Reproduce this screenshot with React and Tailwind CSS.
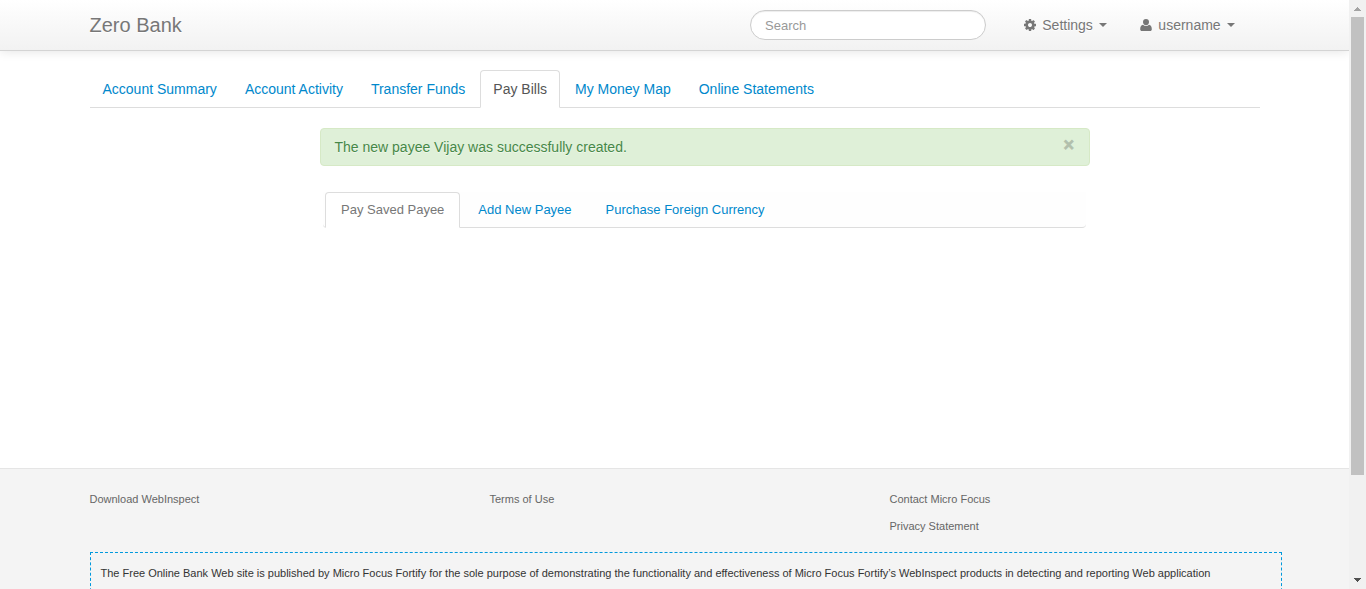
const GEAR =
  "M1152 896q0-106-75-181t-181-75-181 75-75 181 75 181 181 75 181-75 75-181zm512-109v222q0 12-8 23t-20 13l-185 28q-19 54-39 91 35 50 107 138 10 12 10 25t-9 23q-27 37-99 108t-94 71q-12 0-26-9l-138-108q-44 23-91 38-16 136-29 186-7 28-36 28h-222q-14 0-24.5-8.5t-11.5-21.5l-28-184q-49-16-90-37l-141 107q-10 9-25 9-14 0-25-11-126-114-165-168-7-10-7-23 0-12 8-23 15-21 51-66.5t54-70.5q-27-50-41-99l-183-27q-13-2-21-12.5t-8-23.5v-222q0-12 8-23t19-13l186-28q14-46 39-92-40-57-107-138-10-12-10-24 0-10 9-23 26-36 98.5-107.5t94.5-71.5q13 0 26 10l138 107q44-23 91-38 16-136 29-186 7-28 36-28h222q14 0 24.5 8.5t11.5 21.5l28 184q49 16 90 37l142-107q9-9 24-9 13 0 25 10 129 119 165 170 7 8 7 22 0 12-8 23-15 21-51 66.5t-54 70.5q26 50 41 98l183 28q13 2 21 12.5t8 23.5z";

const mainTabs = [
  "Account Summary",
  "Account Activity",
  "Transfer Funds",
  "Pay Bills",
  "My Money Map",
  "Online Statements",
];

const payTabs = ["Pay Saved Payee", "Add New Payee", "Purchase Foreign Currency"];

function Caret() {
  return (
    <span className="mb-px ml-1.5 border-x-4 border-t-4 border-x-transparent border-t-[#777777]" />
  );
}

function Header() {
  return (
    <header className="h-[51px] shrink-0 border-b border-[#d4d4d4] bg-linear-to-b from-white to-[#f2f2f2] shadow-[0_1px_10px_rgba(0,0,0,0.1)]">
      <div className="mx-auto flex h-[50px] w-[1170px] items-center text-[#777777] [text-shadow:0_1px_0_#fff]">
        <a className="w-[660.5px] text-[20px] leading-5">Zero Bank</a>
        <input
          className="h-[30px] w-[236px] rounded-full border border-[#cccccc] bg-white px-3.5 text-[13px] shadow-[inset_0_1px_1px_rgba(0,0,0,0.075)] outline-none placeholder:text-[#999999]"
          placeholder="Search"
        />
        <a className="ml-[37.6px] flex items-center text-sm leading-5">
          <svg className="mr-[6.7px] h-3 w-3" viewBox="128 128 1536 1536" fill="currentColor">
            <path d={GEAR} />
          </svg>
          Settings
          <Caret />
        </a>
        <a className="ml-[33.2px] flex items-center text-sm leading-5">
          <svg className="mr-[6.3px] h-3 w-3" viewBox="0 0 12 12" fill="currentColor">
            <ellipse cx="6" cy="3.1" rx="3" ry="3.1" />
            <path d="M3 5.700C1 6 .2 7.800.2 10.200.2 11.300.9 12 1.900 12h8.200c1 0 1.700-.7 1.700-1.800C11.800 7.800 11 6 9 5.700 8.200 6.500 7.200 6.900 6 6.900S3.800 6.500 3 5.700z" />
          </svg>
          username
          <Caret />
        </a>
      </div>
    </header>
  );
}

function MainTabs() {
  return (
    <nav className="mt-[19px] flex h-[38px] border-b border-[#dddddd] text-sm leading-5">
      {mainTabs.map((t) => (
        <a
          key={t}
          className={
            t === "Pay Bills"
              ? "mr-0.5 h-[38px] rounded-t border border-[#dddddd] border-b-white bg-white px-3 pt-2 text-[#555555]"
              : "mr-0.5 h-[38px] border border-transparent px-3 pt-2 text-[#0088cc]"
          }
        >
          {t}
        </a>
      ))}
    </nav>
  );
}

function Footer() {
  return (
    <footer className="h-[121px] shrink-0 border-t border-[#e5e5e5] bg-[#f4f4f4] pl-[89.5px] text-[11px] text-[#666666]">
      <div className="flex h-[83px] pt-[17px] leading-[27px]">
        <a className="w-[400px]">Download WebInspect</a>
        <a className="w-[400px]">Terms of Use</a>
        <div className="flex flex-col">
          <a>Contact Micro Focus</a>
          <a>Privacy Statement</a>
        </div>
      </div>
      <div className="h-[60px] w-[1192px] border border-dashed border-[#0099dd] px-2.5 pt-2.5 leading-5 whitespace-nowrap text-[#333333]">
        The Free Online Bank Web site is published by Micro Focus Fortify for the sole purpose of
        demonstrating the functionality and effectiveness of Micro Focus Fortify’s WebInspect products
        in detecting and reporting Web application
      </div>
    </footer>
  );
}

function Scrollbar() {
  return (
    <div className="flex w-[17px] flex-col items-center bg-[#f1f1f1]">
      <svg className="h-[17px] w-[17px] shrink-0" viewBox="0 0 17 17" shapeRendering="crispEdges">
        <path d="M5 11V10H6V9H7V8H8V7H9V8H10V9H11V10H12V11z" fill="#a3a3a3" />
      </svg>
      <div className="h-[458px] w-[13px] bg-[#c1c1c1]" />
      <svg className="mt-auto h-[17px] w-[17px] shrink-0" viewBox="0 0 17 17" shapeRendering="crispEdges">
        <path d="M5 6V7H6V8H7V9H8V10H9V9H10V8H11V7H12V6z" fill="#505050" />
      </svg>
    </div>
  );
}

export default function App() {
  return (
    <div className="flex h-[589px] overflow-hidden bg-white font-['Liberation_Sans',Arial,sans-serif]">
      <div className="flex w-[1349px] flex-col overflow-hidden">
        <Header />
        <main className="mx-auto w-[1170px] grow">
          <MainTabs />
          <div className="mt-5 ml-[230.5px] w-[770px]">
            <div className="flex h-[38px] justify-between rounded border border-[#d6e9c6] bg-[#dff0d8] pt-2 pr-[15px] pl-[13.5px] text-sm leading-5 text-[#468847] [text-shadow:0_1px_0_rgba(255,255,255,0.5)]">
              <span>The new payee Vijay was successfully created.</span>
              <button className="-mt-0.5 h-5 text-[18px] leading-5 font-bold text-black opacity-20 [-webkit-text-stroke:0.8px_#000] [text-shadow:0_1px_0_#fff]">
                ×
              </button>
            </div>
            <div className="mt-[26px] mr-1 ml-[3px] flex h-9 rounded-b border-b border-[#dddddd] bg-[#fefefe] pl-0.5 text-[13px] leading-[18px]">
              {payTabs.map((t, i) => (
                <a
                  key={t}
                  className={
                    i === 0
                      ? "mr-0.5 h-9 rounded-t border border-[#dddddd] border-b-white bg-white px-[15px] pt-2 text-[#777777]"
                      : "mr-0.5 h-9 border border-transparent px-[15px] pt-2 text-[#0088cc]"
                  }
                >
                  {t}
                </a>
              ))}
            </div>
          </div>
        </main>
        <Footer />
      </div>
      <Scrollbar />
    </div>
  );
}
